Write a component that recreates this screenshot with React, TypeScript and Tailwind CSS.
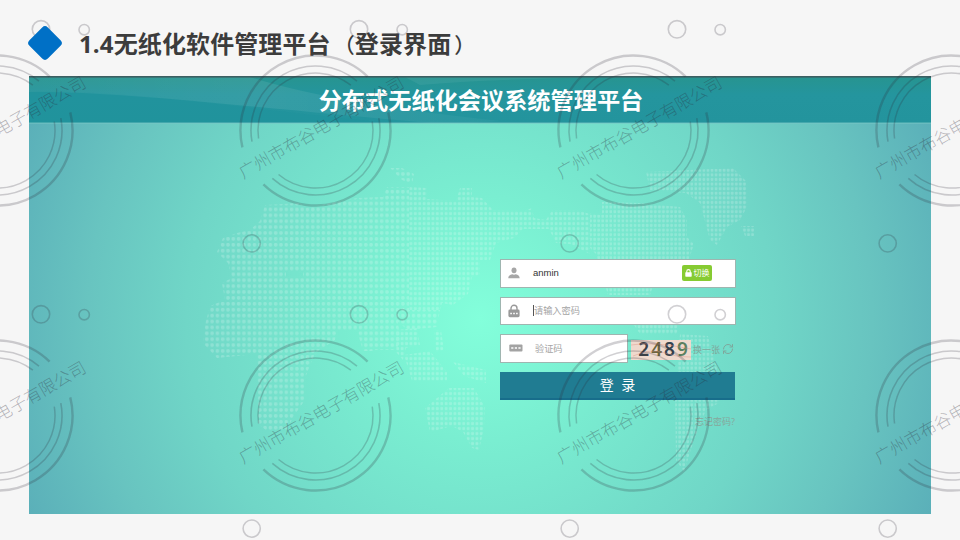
import { RefreshCw } from "lucide-react";

const COLS = [-2.5, 315.5, 633.5, 951.5];
const ROWS = [130.5, 415.5];

// [radius, stroke width, upper arc from/to, lower arc from/to] in degrees
const RINGS = [
    [75, 2.4, 167, 314, -14, 134],
    [64.5, 1.6, 170, 310, -11, 132],
    [57.5, 1.5, 172, 308, -9, 130],
];

function arc(r: number, from: number, to: number) {
    const p = (deg: number) => {
        const a = (deg * Math.PI) / 180;
        return `${(r * Math.cos(a)).toFixed(2)} ${(r * Math.sin(a)).toFixed(2)}`;
    };
    return `M${p(from)}A${r} ${r} 0 0 1 ${p(to)}`;
}

function Watermark() {
    return (
        <svg className="absolute inset-0 pointer-events-none" width="960" height="540" fill="none" stroke="#2c2838" strokeOpacity="0.22">
            {COLS.map((x) => ROWS.map((y) => (
                <g key={`${x}-${y}`} transform={`translate(${x} ${y})`}>
                    {RINGS.map(([r, w, a, b, c, d]) => (
                        <path key={r} d={arc(r, a, b) + arc(r, c, d)} strokeWidth={w} />
                    ))}
                    <text
                        transform="translate(6 -3) rotate(-29.8)"
                        y="6"
                        textAnchor="middle"
                        className="font-['Noto_Sans_CJK_SC',sans-serif] text-[17px] font-light"
                        fill="#2c2838"
                        fillOpacity="0.34"
                        stroke="none"
                    >
                        广州市布谷电子有限公司
                    </text>
                </g>
            )))}
            {[41, 359, 677].map((x) => [29.3, 314.3].map((y) => (
                <g key={`${x}-${y}`} strokeWidth="1.6">
                    <circle cx={x} cy={y} r="8.7" />
                    <circle cx={x + 43.2} cy={y + 0.4} r="5.2" />
                </g>
            )))}
            {[251.7, 569.7, 887.7].map((x) => [243.4, 528.6].map((y) => (
                <circle key={`${x}-${y}`} cx={x} cy={y} r="8.6" strokeWidth="1.6" />
            )))}
        </svg>
    );
}

function Backdrop() {
    return (
        <svg className="absolute inset-0" width="902" height="438" viewBox="29 76 902 438">
            <defs>
                <radialGradient id="glow" gradientUnits="userSpaceOnUse" cx="480" cy="318" r="490">
                    <stop offset="0" stopColor="#83ffdb" />
                    <stop offset="0.25" stopColor="#7aeed1" />
                    <stop offset="0.6" stopColor="#70d6c7" />
                    <stop offset="0.8" stopColor="#68c4c0" />
                    <stop offset="1" stopColor="#5bb0b9" />
                </radialGradient>
                <pattern id="dotsL" x="204.3" y="171.2" width="5.3" height="5.9" patternUnits="userSpaceOnUse">
                    <rect x="0.8" y="1" width="3.4" height="3.6" rx="1.3" fill="#fff" />
                </pattern>
                <pattern id="dotsM" x="400" y="171.2" width="4.4" height="5" patternUnits="userSpaceOnUse">
                    <rect x="0.6" y="0.8" width="3" height="3.3" rx="1.1" fill="#fff" />
                </pattern>
                <pattern id="dotsR" x="540" y="168" width="4.05" height="4.6" patternUnits="userSpaceOnUse">
                    <rect x="0.5" y="0.6" width="2.8" height="3.2" rx="1" fill="#fff" />
                </pattern>
                <linearGradient id="bar" x1="0" y1="0" x2="0" y2="1">
                    <stop offset="0" stopColor="#27948f" />
                    <stop offset="0.4" stopColor="#24959e" />
                    <stop offset="1" stopColor="#23949d" />
                </linearGradient>
                <linearGradient id="sheen" x1="0" y1="0" x2="1" y2="0">
                    <stop offset="0" stopColor="#fff" stopOpacity="0.04" />
                    <stop offset="0.5" stopColor="#fff" stopOpacity="0.08" />
                    <stop offset="1" stopColor="#fff" stopOpacity="0.03" />
                </linearGradient>
            </defs>
            <rect x="29" y="76" width="902" height="438" fill="url(#glow)" />
            <g opacity="0.2">
                <g fill="url(#dotsL)">
                    <path d="M265 205L300 203 305 208 357 198 383 197 387 187H409V310H440L437 327 408 330 398 322 401 342 395 350 376 350 371 351H363L357 330H337L335 340 315 353 305 378V400L293 417 287 430 267 431 258 424 257 354 217 358 203 343 205 325 210 306 225 300 222 283 232 278 228 263 217 252 223 238 237 233 250 230 260 221ZM286 271V278H303V271Z" fillRule="evenodd" />
                    <path d="M390 168L402 168 414 174 412 184 402 180Z" />
                </g>
                <g fill="url(#dotsM)">
                    <path d="M409 187L427 188V199L456 201 460 188H472V197L482 198 493 210 524 211 532 208 534 218 546 220 552 210 577 210 590 214V254L570 244 556 243 549 229H523L514 238 496 243 490 260 480 260V275L472 277 468 294 453 305 442 303 440 310 409 310Z" />
                    <path d="M396 330L417 328 420 345 406 348 403 360 396 352Z" />
                    <path d="M434 330L441 330 444 350 436 352ZM404 355L430 351 447 372V381L412 381Z" />
                    <path d="M453 362L486 370V383L464 376ZM449 388L474 388 485 407 484 428 479 450 472 448 463 432 452 426 430 432 425 408Z" />
                </g>
                <g fill="url(#dotsR)">
                    <path d="M590 213L602 215V202L640 203 680 207 687 220 687 237 694 244 688 262 655 280 650 295H608L596 254 590 248Z" />
                    <path d="M646 172L733 168 746 181 747 207 740 220 727 227 717 245 710 240 700 203 686 193 650 190Z" />
                    <path d="M741 226H754V236H745ZM634 325H678V334H640Z" />
                    <path d="M680 334L708 336 720 380 719 403 706 410 694 440 684 472 676 460 675 395Z" />
                </g>
            </g>
            <rect x="29" y="76" width="902" height="47" fill="url(#bar)" />
            <path d="M29 92C120 89 230 107 390 123H29Z" fill="#178c98" fillOpacity="0.15" />
            <path d="M29 77H250Q330 103 500 121L470 123H430C250 107 120 91 29 92Z" fill="url(#sheen)" />
            <path d="M405 77H640Q500 78 420 85Z" fill="#fff" fillOpacity="0.06" />
            <rect x="29" y="76" width="902" height="1.6" fill="#3c5f62" />
            <rect x="29" y="122.6" width="902" height="0.9" fill="#78c6c6" />
        </svg>
    );
}

function UserIcon() {
    return (
        <svg width="12" height="12" viewBox="0 0 12 12" fill="#a6a6a6">
            <ellipse cx="6" cy="3.3" rx="2.5" ry="2.9" />
            <path d="M0.3 11.3C0.3 8.8 2 7.7 4.2 7.2L6 7.8 7.8 7.2C10 7.7 11.7 8.8 11.7 11.3Z" />
        </svg>
    );
}

function LockIcon() {
    return (
        <svg width="12" height="14" viewBox="0 0 12 14">
            <path d="M3 6V4.3a3 3 0 0 1 6 0V6" fill="none" stroke="#999" strokeWidth="1.4" />
            <rect x="0.4" y="5.6" width="11.2" height="7.6" rx="1.4" fill="#999" />
            <path d="M2.3 9.5h1.6M5.2 9.5h1.6M8.1 9.5h1.6" stroke="#fff" strokeWidth="1.3" />
        </svg>
    );
}

function CodeIcon() {
    return (
        <svg width="14" height="8" viewBox="0 0 14 8">
            <rect x="0.3" y="0.5" width="13.2" height="7" rx="1" fill="#a3a3a3" />
            <path d="M2.2 4h2.2M5.8 4H8M9.4 4h2.2" stroke="#fff" strokeWidth="1.7" />
        </svg>
    );
}

const field = "flex items-center h-[28.5px] bg-white border border-[#9fb5b0] pl-[7px]";

export default function App() {
    return (
        <div className="relative w-[960px] h-[540px] overflow-hidden bg-[#f6f6f6] font-['Open_Sans','Noto_Sans_CJK_SC',sans-serif]">
            <header className="flex items-center h-[76px] pl-[26px] pt-[10px]">
                <svg className="relative z-10" width="38" height="38" viewBox="0 0 38 38">
                    <rect x="6" y="6" width="26" height="26" rx="4" fill="#0070c6" transform="rotate(45 19 19)" />
                </svg>
                <h1 className="relative z-10 ml-[15px] mt-[2px] text-2xl leading-8 font-bold tracking-[0.12px] text-[#3c3c3c] whitespace-nowrap">
                    1.4无纸化软件管理平台<span className="text-[21px] font-medium pl-[3px]">（</span>登录界面<span className="text-[21px] font-medium pl-[3px]">）</span>
                </h1>
            </header>

            <main className="relative ml-[29px] w-[902px] h-[438px]">
                <Backdrop />
                <div className="relative">
                    <h2 className="h-[47px] pl-[2px] text-center text-[23.2px] leading-[48px] font-bold text-white">分布式无纸化会议系统管理平台</h2>

                    <form className="ml-[471px] mt-[136px] w-[236px] text-[9.2px]">
                        <div className={field}>
                            <UserIcon />
                            <span className="ml-[13px] font-['Liberation_Sans'] text-[9.5px] text-[#333]">anmin</span>
                            <span className="ml-auto mr-[23px] flex items-center justify-center gap-[2px] w-[30px] h-4 rounded-[2px] bg-[#86cb32] text-[8px] text-white whitespace-nowrap">
                                <svg width="7" height="8" viewBox="0 0 7 8">
                                    <path d="M1.8 4V2.3a1.7 1.7 0 0 1 3.4 0V4" fill="none" stroke="#fff" strokeWidth="1.1" />
                                    <rect x="0.3" y="3.2" width="6.4" height="4.5" rx="0.6" fill="#fff" />
                                </svg>
                                切换
                            </span>
                        </div>
                        <div className={`${field} mt-[9px]`}>
                            <LockIcon />
                            <span className="ml-[13px] h-[11px] w-px bg-[#555]" />
                            <span className="text-[#a4a4a4]">请输入密码</span>
                        </div>
                        <div className="flex items-center mt-[9px]">
                            <div className={`${field} w-[128px] pl-[8px]`}>
                                <CodeIcon />
                                <span className="ml-[12px] pt-px text-[#a4a4a4]">验证码</span>
                            </div>
                            <div className="relative ml-[3px] mt-[3px] w-[60px] h-5 bg-[#efd9cd] flex items-center justify-center gap-[2px] pl-1 font-['Noto_Sans','Open_Sans'] text-[19px] font-semibold leading-none">
                                <span className="text-[#3a4048]">2</span>
                                <span className="text-[#6a6440]">4</span>
                                <span className="text-[#33424f]">8</span>
                                <span className="text-[#5c8060]">9</span>
                                <svg className="absolute inset-0" width="60" height="20" fill="none" stroke="#d98f83" strokeOpacity="0.4">
                                    <path d="M0 5Q22 1 60 9M2 16Q20 8 34 13T60 17" />
                                </svg>
                            </div>
                            <span className="ml-[2px] mt-[3px] text-[9px] text-[#7fa79c] whitespace-nowrap">换一张</span>
                            <RefreshCw className="ml-[2px] mt-[2px] shrink-0" size={12} strokeWidth={2} color="#7fa79c" />
                        </div>
                        <button type="button" className="mt-[9px] block w-[235px] h-[28px] bg-[#207c92] border-b-2 border-[#176d8b] text-sm leading-[26px] text-white">
                            登&nbsp; 录
                        </button>
                        <div className="mt-[14px] pr-[1px] text-right text-[9px] leading-4 text-[#86a89c]">忘记密码?</div>
                    </form>
                </div>
            </main>
            <Watermark />
        </div>
    );
}
